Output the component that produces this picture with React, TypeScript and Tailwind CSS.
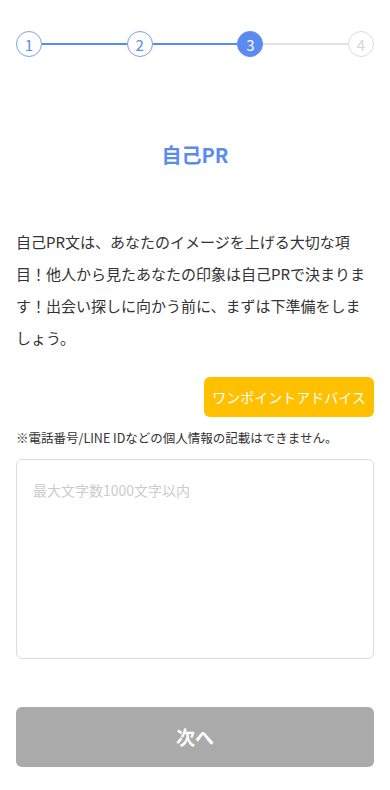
import React from "react";

const font = { fontFamily: '"Noto Sans CJK JP", "Noto Sans", sans-serif' };

function Circle({ n, state }: { n: number; state: "done" | "active" | "todo" }) {
  const cls =
    state === "active"
      ? "bg-[#5b8af0] border-[#5b8af0] text-white"
      : state === "done"
      ? "bg-white border-[#7aa0f3] text-[#5b8af0]"
      : "bg-white border-[#dddddd] text-[#d6d6d6]";
  return (
    <div
      className={`w-[26px] h-[26px] shrink-0 rounded-full border flex items-center justify-center text-[15px] leading-none ${cls}`}
    >
      {n}
    </div>
  );
}

export default function App() {
  return (
    <div className="bg-white min-h-[790px] px-4 text-[#333]" style={font}>
      <div className="pt-[31px] flex items-center">
        <Circle n={1} state="done" />
        <div className="flex-1 h-[2px] bg-[#5b8af0]" />
        <Circle n={2} state="done" />
        <div className="flex-1 h-[2px] bg-[#5b8af0]" />
        <Circle n={3} state="active" />
        <div className="flex-1 h-[2px] bg-[#e2e2e2]" />
        <Circle n={4} state="todo" />
      </div>

      <h1 className="mt-[86px] text-center text-[20px] leading-[24px] font-bold text-[#5b8af0]">
        自己PR
      </h1>

      <p className="mt-[59px] text-[15px] leading-[32px] text-[#333]">
        自己PR文は、あなたのイメージを上げる大切な項目！他人から見たあなたの印象は自己PRで決まります！出会い探しに向かう前に、まずは下準備をしましょう。
      </p>

      <div className="mt-[23px] flex justify-end">
        <button className="h-[40px] w-[170px] rounded-[6px] bg-[#ffc000] text-white text-[14px]">
          ワンポイントアドバイス
        </button>
      </div>

      <p className="mt-[11px] text-[12.5px] leading-[20px] text-[#333]">
        ※電話番号/LINE IDなどの個人情報の記載はできません。
      </p>

      <textarea
        className="mt-[11px] block w-full h-[200px] rounded-[6px] border border-[#dddddd] px-4 pt-[20px] text-[14px] leading-[20px] placeholder-[#cccccc] resize-none outline-none"
        placeholder="最大文字数1000文字以内"
        style={font}
      />

      <button className="mt-[48px] w-full h-[60px] rounded-[6px] bg-[#aaaaaa] text-white text-[19px] font-bold">
        次へ
      </button>
    </div>
  );
}
